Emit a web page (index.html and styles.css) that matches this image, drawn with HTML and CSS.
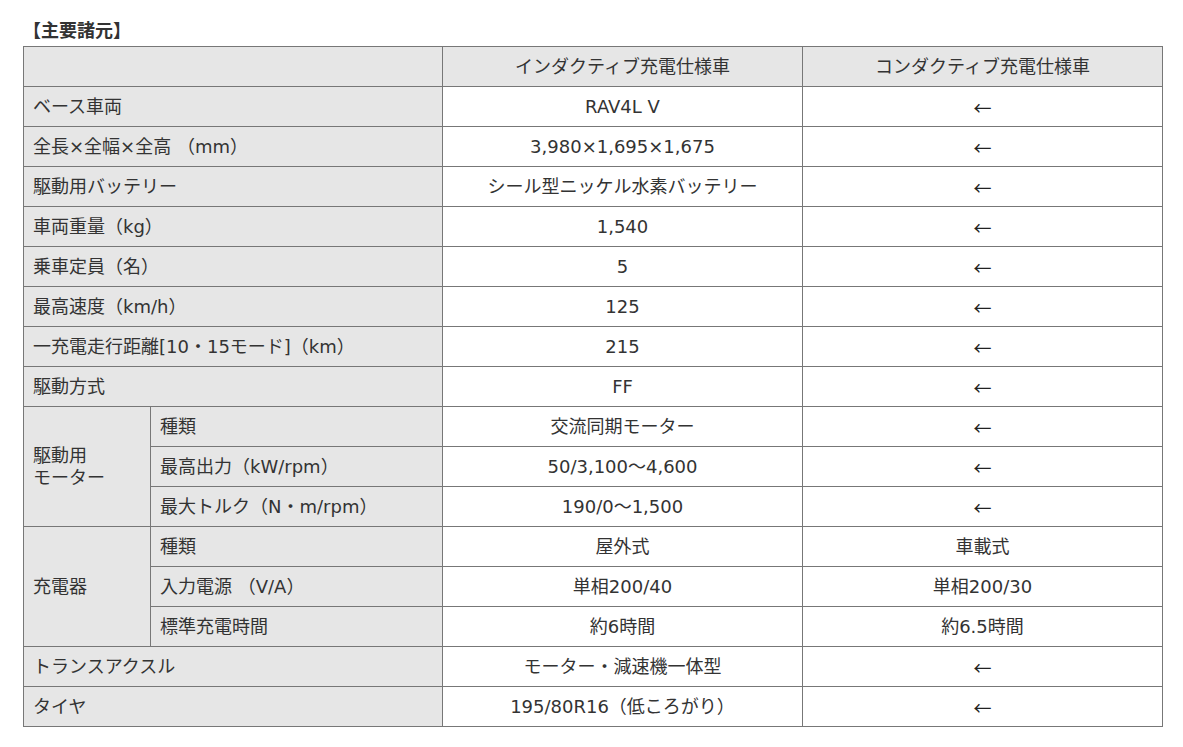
FILE: index.html
```html
<!DOCTYPE html>
<html lang="ja">
<head>
<meta charset="utf-8">
<title>主要諸元</title>
<link rel="stylesheet" href="styles.css">
</head>
<body>
<div class="page">
  <h2 class="title">【主要諸元】</h2>
  <table class="spec">
    <colgroup>
      <col class="c-sub1"><col class="c-sub2"><col class="c-val"><col class="c-val">
    </colgroup>
    <tr class="head">
      <th colspan="2"></th>
      <th>インダクティブ充電仕様車</th>
      <th>コンダクティブ充電仕様車</th>
    </tr>
    <tr><th colspan="2" class="lab">ベース車両</th><td>RAV4L V</td><td class="arr">←</td></tr>
    <tr><th colspan="2" class="lab">全長×全幅×全高 （mm）</th><td>3,980×1,695×1,675</td><td class="arr">←</td></tr>
    <tr><th colspan="2" class="lab">駆動用バッテリー</th><td>シール型ニッケル水素バッテリー</td><td class="arr">←</td></tr>
    <tr><th colspan="2" class="lab">車両重量（kg）</th><td>1,540</td><td class="arr">←</td></tr>
    <tr><th colspan="2" class="lab">乗車定員（名）</th><td>5</td><td class="arr">←</td></tr>
    <tr><th colspan="2" class="lab">最高速度（km/h）</th><td>125</td><td class="arr">←</td></tr>
    <tr><th colspan="2" class="lab">一充電走行距離[10・15モード]（km）</th><td>215</td><td class="arr">←</td></tr>
    <tr><th colspan="2" class="lab">駆動方式</th><td>FF</td><td class="arr">←</td></tr>
    <tr><th rowspan="3" class="lab">駆動用<br>モーター</th><th class="lab">種類</th><td>交流同期モーター</td><td class="arr">←</td></tr>
    <tr><th class="lab">最高出力（kW/rpm）</th><td>50/3,100～4,600</td><td class="arr">←</td></tr>
    <tr><th class="lab">最大トルク（N・m/rpm）</th><td>190/0～1,500</td><td class="arr">←</td></tr>
    <tr><th rowspan="3" class="lab">充電器</th><th class="lab">種類</th><td>屋外式</td><td>車載式</td></tr>
    <tr><th class="lab">入力電源 （V/A）</th><td>単相200/40</td><td>単相200/30</td></tr>
    <tr><th class="lab">標準充電時間</th><td>約6時間</td><td>約6.5時間</td></tr>
    <tr><th colspan="2" class="lab">トランスアクスル</th><td>モーター・減速機一体型</td><td class="arr">←</td></tr>
    <tr><th colspan="2" class="lab">タイヤ</th><td>195/80R16（低ころがり）</td><td class="arr">←</td></tr>
  </table>
</div>
</body>
</html>
```

FILE: styles.css
```css
html, body {
  margin: 0;
  padding: 0;
  background: #ffffff;
}

.page {
  padding: 17px 0 0 23px;
  color: #333333;
  font-family: "DejaVu Sans", "Noto Sans CJK JP", sans-serif;
}

.title {
  margin: 0 0 5px 0;
  height: 24px;
  line-height: 24px;
  font-size: 18px;
  font-weight: bold;
  font-family: "Noto Sans CJK JP", sans-serif;
  color: #333333;
}

.spec {
  border-collapse: collapse;
  width: 1140px;
  table-layout: fixed;
  font-size: 18px;
}

.c-sub1 { width: 127px; }
.c-sub2 { width: 292px; }
.c-val { width: 360px; }

.spec th,
.spec td {
  border: 1px solid #777777;
  height: 39px;
  padding: 0 9px;
  line-height: 22px;
  vertical-align: middle;
  font-weight: normal;
  white-space: nowrap;
}

.spec th {
  background: #e6e6e6;
}

.spec .head th {
  text-align: center;
}

.spec th.lab {
  text-align: left;
}

.spec td {
  background: #ffffff;
  text-align: center;
}

.spec td.arr {
  font-family: "Noto Sans CJK JP", sans-serif;
  color: #222222;
}
```
